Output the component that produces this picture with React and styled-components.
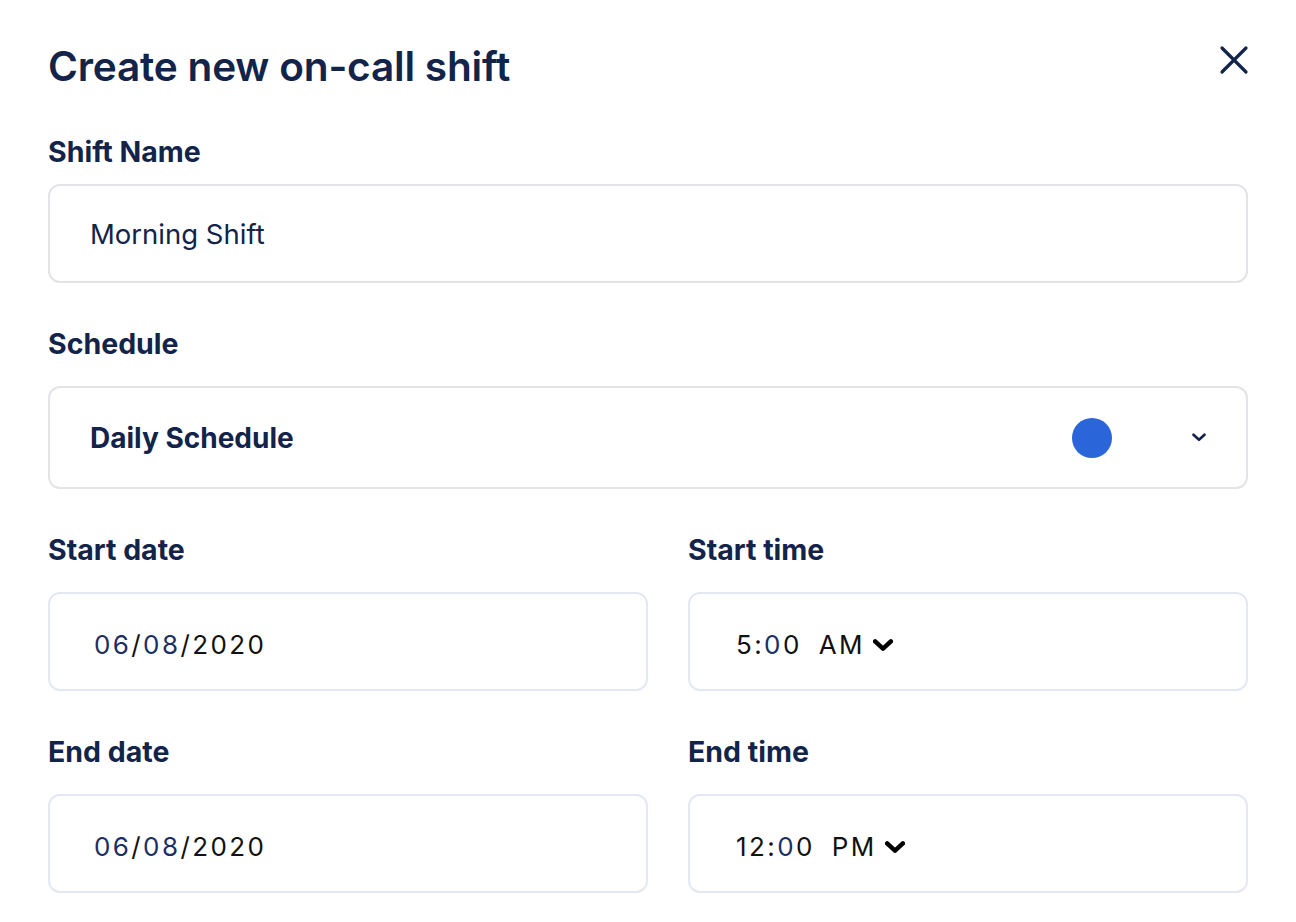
import React from "react";
import styled, { createGlobalStyle } from "styled-components";

const GlobalStyle = createGlobalStyle`
  body {
    margin: 0;
    background: #ffffff;
    font-family: Inter, "Noto Sans", sans-serif;
    color: #13244a;
  }
`;

const Modal = styled.div`
  width: 1296px;
  box-sizing: border-box;
  padding: 41px 48px 0 48px;
`;

const Header = styled.div`
  display: flex;
  justify-content: space-between;
  align-items: flex-start;
  margin-bottom: 45px;
`;

const Title = styled.h1`
  margin: 0;
  font-size: 40.6px;
  line-height: 52px;
  font-weight: 600;
  letter-spacing: -0.2px;
  color: #13244a;
`;

const CloseButton = styled.button`
  border: none;
  background: none;
  padding: 0;
  margin: 3px -2px 0 0;
  width: 32px;
  height: 32px;
  cursor: pointer;
  display: flex;
  align-items: center;
  justify-content: center;
`;

const Field = styled.div`
  display: flex;
  flex-direction: column;
  margin-bottom: 47px;
`;

const Label = styled.label`
  font-size: 28.5px;
  line-height: 28px;
  font-weight: 700;
  color: #13244a;
  margin-bottom: ${(p) => (p.first ? "18px" : "28px")};
`;

const Box = styled.div`
  box-sizing: border-box;
  height: ${(p) => (p.tall ? "103px" : "99px")};
  border: 2px solid ${(p) => (p.blue ? "#e5e8f3" : "#e3e3e8")};
  border-radius: 12px;
  display: flex;
  align-items: center;
  padding-left: ${(p) => p.pad || "40px"};
  padding-right: 40px;
  font-size: 27.5px;
  color: #13244a;
`;

const Value = styled.span`
  font-weight: ${(p) => (p.bold ? 700 : 400)};
  font-size: ${(p) => (p.bold ? "28px" : "inherit")};
  flex: 1;
  display: flex;
  align-items: center;
  margin-top: ${(p) => p.shift || 0}px;
`;

const Dot = styled.span`
  width: 40px;
  height: 40px;
  border-radius: 50%;
  background: #2a65d9;
  margin-right: 80px;
`;

const Row = styled.div`
  display: grid;
  grid-template-columns: 600px 560px;
  column-gap: 40px;
`;

const Seg = styled.span`
  color: ${(p) => (p.accent ? "#1c2f63" : "#111111")};
  font-size: 26px;
  font-weight: 400;
  letter-spacing: 2.4px;
`;

const Gap = styled.span`
  display: inline-block;
  width: ${(p) => p.w}px;
`;

const Chevron = ({ size = 14, stroke = 2.6, color = "#13244a" }) => (
  <svg width={size} height={size * 0.6} viewBox="0 0 14 8" fill="none">
    <path d="M1.5 1.5 L7 6.5 L12.5 1.5" stroke={color} strokeWidth={stroke} strokeLinecap="round" strokeLinejoin="round" />
  </svg>
);

const DateValue = ({ m, d, y }) => (
  <Value shift={5}>
    <Seg accent>{m}</Seg>
    <Seg>/</Seg>
    <Seg accent>{d}</Seg>
    <Seg>/</Seg>
    <Seg>{y}</Seg>
  </Value>
);

const TimeValue = ({ h, min, ap }) => (
  <Value shift={6}>
    <Seg>{h}:</Seg>
    <Seg accent>{min[0]}</Seg>
    <Seg>{min[1]}</Seg>
    <Gap w={17} />
    <Seg>{ap}</Seg>
    <Gap w={8} />
    <Chevron size={20} stroke={3.2} color="#000" />
  </Value>
);

export default function App() {
  return (
    <>
      <GlobalStyle />
      <Modal>
        <Header>
          <Title>Create new on-call shift</Title>
          <CloseButton aria-label="Close">
            <svg width="30" height="30" viewBox="0 0 30 30">
              <path d="M3 3 L27 27 M27 3 L3 27" stroke="#13244a" strokeWidth="3.2" strokeLinecap="round" />
            </svg>
          </CloseButton>
        </Header>

        <Field>
          <Label first>Shift Name</Label>
          <Box>
            <Value>Morning Shift</Value>
          </Box>
        </Field>

        <Field>
          <Label>Schedule</Label>
          <Box tall>
            <Value bold>Daily Schedule</Value>
            <Dot />
            <Chevron />
          </Box>
        </Field>

        <Row>
          <Field>
            <Label>Start date</Label>
            <Box blue pad="44px">
              <DateValue m="06" d="08" y="2020" />
            </Box>
          </Field>
          <Field>
            <Label>Start time</Label>
            <Box blue pad="46px">
              <TimeValue h="5" min="00" ap="AM" />
            </Box>
          </Field>
        </Row>

        <Row>
          <Field>
            <Label>End date</Label>
            <Box blue pad="44px">
              <DateValue m="06" d="08" y="2020" />
            </Box>
          </Field>
          <Field>
            <Label>End time</Label>
            <Box blue pad="46px">
              <TimeValue h="12" min="00" ap="PM" />
            </Box>
          </Field>
        </Row>
      </Modal>
    </>
  );
}
